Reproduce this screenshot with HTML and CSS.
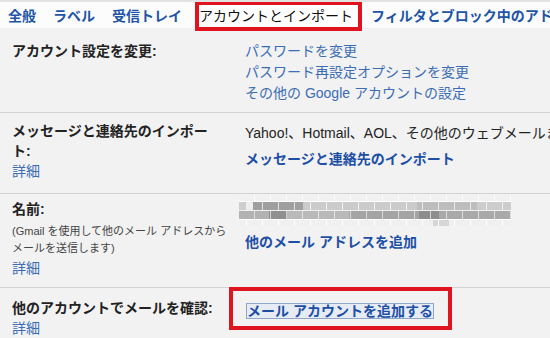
FILE: index.html
```html
<!DOCTYPE html>
<html lang="ja">
<head>
    <meta charset="UTF-8">
    <meta name="viewport" content="width=device-width, initial-scale=1.0">
    <title>設定 - アカウントとインポート</title>
    <link rel="stylesheet" href="styles.css">
</head>
<body>

<div class="tabs">
    <a class="tab" href="#">全般</a>
    <a class="tab" href="#">ラベル</a>
    <a class="tab" href="#">受信トレイ</a>
    <span class="tab active">アカウントとインポート</span>
    <a class="tab" href="#">フィルタとブロック中のアドレス</a>
    <a class="tab" href="#">メール転送と POP/IMAP</a>
</div>

<div class="settings">
    <div class="row row-account">
        <div class="label"><strong>アカウント設定を変更:</strong></div>
        <div class="value links">
            <a href="#">パスワードを変更</a>
            <a href="#">パスワード再設定オプションを変更</a>
            <a href="#">その他の Google アカウントの設定</a>
        </div>
    </div>

    <div class="row row-import">
        <div class="label">
            <strong>メッセージと連絡先のインポート:</strong>
            <a class="more" href="#">詳細</a>
        </div>
        <div class="value">
            <div class="note">Yahoo!、Hotmail、AOL、その他のウェブメールまたは POP3 アカウントからインポートします。</div>
            <a class="action" href="#">メッセージと連絡先のインポート</a>
        </div>
    </div>

    <div class="row row-name">
        <div class="label">
            <strong>名前:</strong>
            <div class="hint">(Gmail を使用して他のメール アドレスから<br>メールを送信します)</div>
            <a class="more" href="#">詳細</a>
        </div>
        <div class="value">
            <!-- ぼかした名前の部分 -->
            <div class="blur">
                <div class="blur-row r1"></div>
                <div class="blur-row r2"></div>
                <div class="blur-row r3"></div>
                <div class="blur-row r4"></div>
            </div>
            <a class="action" href="#">他のメール アドレスを追加</a>
        </div>
    </div>

    <div class="row row-check">
        <div class="label">
            <strong>他のアカウントでメールを確認:</strong>
            <a class="more" href="#">詳細</a>
        </div>
        <div class="value">
            <div class="mark">
                <a class="action focused" href="#">メール アカウントを追加する</a>
            </div>
        </div>
    </div>
</div>

</body>
</html>
```

FILE: styles.css
```css
body {
    margin: 0;
    font-family: "Liberation Sans", "Noto Sans CJK JP", sans-serif;
    font-size: 14px;
    color: #222;
    background-color: #f2f2f2;
    overflow: hidden;
}

a {
    text-decoration: none;
}

.tabs {
    display: flex;
    align-items: flex-start;
    height: 26px;
    padding-left: 8px;
    background-color: #fcfcfc;
    border-top: 2px solid #e2e2e2;
    white-space: nowrap;
}

.tab {
    margin-top: 3px;
    margin-right: 17px;
    line-height: 22px;
    font-weight: bold;
    color: #2154a6;
}

.tab.active {
    margin: 0 9px 0 -4px;
    padding: 0 5px 0 0;
    border: 4px solid #e0141e;
    border-top-width: 3px;
    font-weight: normal;
    color: #111;
    background-color: #fff;
    position: relative; /* keeps the marker above the row below */
    z-index: 1;
}

.row {
    display: grid;
    grid-template-columns: 208px 1fr;
    column-gap: 25px;
    padding-left: 12px;
    border-bottom: 1px solid #d2d2d2;
    white-space: nowrap;
}

.label {
    white-space: normal;
    line-height: 20px;
}

.label strong {
    display: block;
    color: #222;
}

.more {
    display: block;
    color: #3b6cb6;
}

.links a {
    display: block;
    line-height: 21px;
    color: #3b6cb6;
}

.action {
    display: inline-block;
    line-height: 20px;
    font-weight: bold;
    color: #1d4fa6;
}

.row-account {
    padding: 13px 0 8px 12px;
}

.row-account .label {
    line-height: 21px;
}

.row-import {
    padding-top: 8px;
    padding-bottom: 12px;
}

.row-import .value {
    padding-top: 2px;
}

.note {
    line-height: 20px;
    color: #222;
}

.row-import .action {
    margin-top: 6px;
}

.row-name {
    padding-top: 5px;
    padding-bottom: 9px;
}

.hint {
    margin-top: 4px;
    font-size: 11px;
    line-height: 17px;
    color: #444;
    white-space: nowrap;
}

.row-name .more {
    margin-top: 1px;
}

.row-name .value {
    margin-top: -4px;
}

.row-name .action {
    margin-top: 6px;
}

/* blurred name picture */
.blur {
    width: 272px;
    margin-left: -6px;
}

.blur-row {
    background-image:
        repeating-linear-gradient(90deg, transparent 0 15px, rgba(255, 255, 255, 0.8) 15px 16px);
}

.blur-row.r1 {
    height: 6px;
    background-color: #f1f1f1;
    border-bottom: 1px solid #fff;
}

.blur-row.r2 {
    height: 8px;
    background-position: 8px 0;
    background-color: #c9c9c9;
    background-image:
        repeating-linear-gradient(90deg, transparent 0 15px, rgba(255, 255, 255, 0.7) 15px 16px),
        linear-gradient(90deg, #eee 0 6px, #9f9f9f 6px 56px, #cbcbcb 56px 170px, #bdbdbd 170px 230px, #cdcdcd 230px);
    border-bottom: 1px solid #eee;
}

.blur-row.r3 {
    height: 8px;
    background-image:
        repeating-linear-gradient(90deg, transparent 0 15px, rgba(255, 255, 255, 0.6) 15px 16px),
        linear-gradient(90deg, #b2b2b2 0 30px, #8f8f8f 30px 48px, #b9b9b9 48px 110px, #a4a4a4 110px 180px, #8d8d8d 180px 200px, #a9a9a9 200px);
    border-bottom: 1px solid #fff;
}

.blur-row.r4 {
    height: 6px;
    background-position: 8px 0;
    background-color: #f0f0f0;
    background-image:
        repeating-linear-gradient(90deg, transparent 0 15px, #fff 15px 16px),
        linear-gradient(90deg, #f0f0f0 0 186px, #d6d6d6 186px 202px, #f0f0f0 202px);
}

.row-check {
    border-bottom: none;
    padding-top: 10px;
}

.row-check .value {
    margin-top: -11px;
}

.mark {
    display: inline-block;
    margin-left: -16px;
    padding: 10px 14px 7px 13px;
    border: 4px solid #e0141e;
}

.action.focused {
    line-height: 14px;
    border: 1px solid #8ea5cc;
    background-color: #e6ebf4;
    margin-top: 2px;
}
```
